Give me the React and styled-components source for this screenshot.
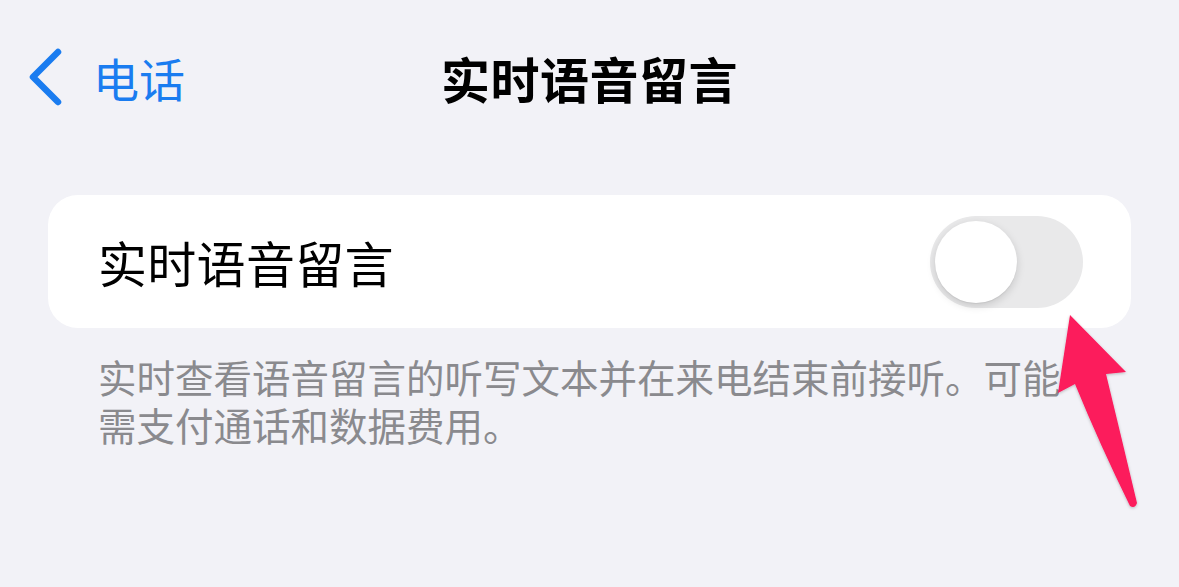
import React from 'react';
import styled, {createGlobalStyle} from 'styled-components';

const GlobalStyle = createGlobalStyle`
  html, body {
    margin: 0;
    padding: 0;
    background: #f2f2f7;
  }
  body {
    font-family: "Noto Sans CJK SC", "Noto Sans", sans-serif;
  }
`;

const Page = styled.div`
  position: relative;
  width: 1179px;
  height: 587px;
  overflow: hidden;
  background: #f2f2f7;
`;

const NavBar = styled.div`
  display: grid;
  grid-template-columns: 1fr auto 1fr;
  align-items: center;
  height: 104px;
  padding: 48px 0 0 0;
  box-sizing: border-box;
`;

const BackButton = styled.div`
  display: flex;
  align-items: center;
  gap: 30px;
  padding-left: 27px;
  color: #1a7cf0;
  font-size: 46px;
  line-height: 1;
`;

const Title = styled.div`
  font-size: 49px;
  font-weight: 700;
  color: #000;
  line-height: 1;
  letter-spacing: 0.5px;
`;

const Content = styled.div`
  padding: 91px 48px 0 48px;
`;

const Card = styled.div`
  display: flex;
  align-items: center;
  justify-content: space-between;
  height: 133px;
  background: #fff;
  border-radius: 30px;
  padding: 0 48px 0 50px;
`;

const Label = styled.div`
  font-size: 49px;
  color: #000;
  line-height: 1;
  letter-spacing: 0.3px;
`;

const Track = styled.div`
  position: relative;
  width: 153px;
  height: 92px;
  border-radius: 46px;
  background: ${p => (p.$on ? '#34c759' : '#e9e9ea')};
`;

const Knob = styled.div`
  position: absolute;
  top: 5px;
  left: ${p => (p.$on ? '66px' : '5px')};
  width: 82px;
  height: 82px;
  border-radius: 50%;
  background: #fff;
  box-shadow: 0 3px 8px rgba(0, 0, 0, 0.15), 0 1px 1px rgba(0, 0, 0, 0.06);
`;

const Footer = styled.p`
  margin: 24px 0 0 0;
  padding: 0 50px;
  font-size: 38.5px;
  line-height: 48px;
  color: #8a8a8e;
`;

const Arrow = styled.svg`
  position: absolute;
  left: 0;
  top: 0;
  pointer-events: none;
`;

const Chevron = () => (
  <svg width="36" height="58" viewBox="0 0 36 58">
    <path d="M31 4 L6 29 L31 54" fill="none" stroke="#1a7cf0" strokeWidth="6.5" strokeLinecap="round" strokeLinejoin="round" />
  </svg>
);

export default function App() {
  const on = false;
  return (
    <Page>
      <GlobalStyle />
      <NavBar>
        <BackButton>
          <Chevron />
          <span>电话</span>
        </BackButton>
        <Title>实时语音留言</Title>
        <div />
      </NavBar>
      <Content>
        <Card>
          <Label>实时语音留言</Label>
          <Track $on={on}>
            <Knob $on={on} />
          </Track>
        </Card>
        <Footer>实时查看语音留言的听写文本并在来电结束前接听。可能需支付通话和数据费用。</Footer>
      </Content>
      <Arrow width="1179" height="587" viewBox="0 0 1179 587">
        <defs>
          <filter id="sh" x="-20%" y="-20%" width="140%" height="140%">
            <feDropShadow dx="0" dy="1" stdDeviation="1.5" floodColor="#000" floodOpacity="0.25" />
          </filter>
        </defs>
        <path
          d="M1070 315 L1126 372 L1106 374 Q1122 440 1137 503 Q1135 509 1130 506 Q1100 445 1075 384 L1058 393 Z"
          fill="#fc1a5c"
          filter="url(#sh)"
        />
      </Arrow>
    </Page>
  );
}
